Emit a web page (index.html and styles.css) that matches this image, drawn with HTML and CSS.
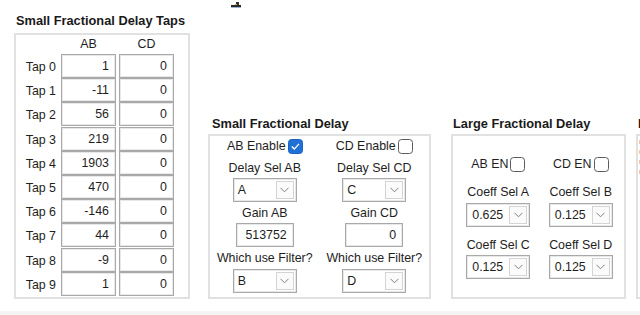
FILE: index.html
```html
<!DOCTYPE html>
<html lang="en">

<head>
    <meta charset="UTF-8">
    <meta name="viewport" content="width=device-width, initial-scale=1.0">
    <title>Fractional Delay Settings</title>
    <link rel="stylesheet" href="styles.css">
</head>

<body>
    <div class="stray-mark">
        <svg width="11" height="7" viewBox="0 0 11 7">
            <rect x="0" y="4" width="10" height="2" fill="#2a2a2a" />
            <rect x="5" y="1" width="3" height="3" fill="#333" />
            <rect x="4" y="3" width="2" height="1" fill="#d9b25a" />
            <rect x="0" y="6" width="10" height="1" fill="#9ab4d6" />
        </svg>
    </div>

    <div class="page">
        <!-- Small fractional delay taps -->
        <section class="panel panel-taps">
            <h3 class="panel-title">Small Fractional Delay Taps</h3>
            <div class="box taps-grid">
                <span></span>
                <span class="col-head">AB</span>
                <span class="col-head">CD</span>

                <span class="tap-label">Tap 0</span><span class="num-box">1</span><span class="num-box">0</span>
                <span class="tap-label">Tap 1</span><span class="num-box">-11</span><span class="num-box">0</span>
                <span class="tap-label">Tap 2</span><span class="num-box">56</span><span class="num-box">0</span>
                <span class="tap-label">Tap 3</span><span class="num-box">219</span><span class="num-box">0</span>
                <span class="tap-label">Tap 4</span><span class="num-box">1903</span><span class="num-box">0</span>
                <span class="tap-label">Tap 5</span><span class="num-box">470</span><span class="num-box">0</span>
                <span class="tap-label">Tap 6</span><span class="num-box">-146</span><span class="num-box">0</span>
                <span class="tap-label">Tap 7</span><span class="num-box">44</span><span class="num-box">0</span>
                <span class="tap-label">Tap 8</span><span class="num-box">-9</span><span class="num-box">0</span>
                <span class="tap-label">Tap 9</span><span class="num-box">1</span><span class="num-box">0</span>
            </div>
        </section>

        <!-- Small fractional delay -->
        <section class="panel panel-sfd">
            <h3 class="panel-title">Small Fractional Delay</h3>
            <div class="box sfd-box">
                <div class="sfd-col">
                    <div class="enable-row">AB Enable
                        <svg class="check" width="15" height="15" viewBox="0 0 15 15">
                            <rect x="0.5" y="0.5" width="14" height="14" rx="3" fill="#2170d6" stroke="#1c62bd" />
                            <path d="M3.8 7.6 L6.3 10.1 L11 4.9" fill="none" stroke="#fff" stroke-width="1.4" />
                        </svg>
                    </div>
                    <div class="field-label sfd-first">Delay Sel AB</div>
                    <div class="select">A<span class="drop"><svg width="9" height="6" viewBox="0 0 9 6"><polyline points="0.5,0.8 4.5,4.8 8.5,0.8" fill="none" stroke="#808080" /></svg></span></div>
                    <div class="field-label">Gain AB</div>
                    <div class="num-box gain">513752</div>
                    <div class="field-label">Which use Filter?</div>
                    <div class="select">B<span class="drop"><svg width="9" height="6" viewBox="0 0 9 6"><polyline points="0.5,0.8 4.5,4.8 8.5,0.8" fill="none" stroke="#808080" /></svg></span></div>
                </div>
                <div class="sfd-col">
                    <div class="enable-row">CD Enable
                        <svg class="check" width="15" height="15" viewBox="0 0 15 15">
                            <rect x="0.5" y="0.5" width="14" height="14" rx="3" fill="#fff" stroke="#5c5c5c" />
                        </svg>
                    </div>
                    <div class="field-label sfd-first">Delay Sel CD</div>
                    <div class="select">C<span class="drop"><svg width="9" height="6" viewBox="0 0 9 6"><polyline points="0.5,0.8 4.5,4.8 8.5,0.8" fill="none" stroke="#808080" /></svg></span></div>
                    <div class="field-label">Gain CD</div>
                    <div class="num-box gain">0</div>
                    <div class="field-label">Which use Filter?</div>
                    <div class="select">D<span class="drop"><svg width="9" height="6" viewBox="0 0 9 6"><polyline points="0.5,0.8 4.5,4.8 8.5,0.8" fill="none" stroke="#808080" /></svg></span></div>
                </div>
            </div>
        </section>

        <!-- Large fractional delay -->
        <section class="panel panel-lfd">
            <h3 class="panel-title">Large Fractional Delay</h3>
            <div class="box lfd-box">
                <div class="lfd-col">
                    <div class="enable-row lfd-enable">AB EN
                        <svg class="check" width="15" height="15" viewBox="0 0 15 15">
                            <rect x="0.5" y="0.5" width="14" height="14" rx="3" fill="#fff" stroke="#5c5c5c" />
                        </svg>
                    </div>
                    <div class="field-label lfd-label">Coeff Sel A</div>
                    <div class="select coeff">0.625<span class="drop"><svg width="9" height="6" viewBox="0 0 9 6"><polyline points="0.5,0.8 4.5,4.8 8.5,0.8" fill="none" stroke="#808080" /></svg></span></div>
                    <div class="field-label lfd-label2">Coeff Sel C</div>
                    <div class="select coeff">0.125<span class="drop"><svg width="9" height="6" viewBox="0 0 9 6"><polyline points="0.5,0.8 4.5,4.8 8.5,0.8" fill="none" stroke="#808080" /></svg></span></div>
                </div>
                <div class="lfd-col">
                    <div class="enable-row lfd-enable">CD EN
                        <svg class="check" width="15" height="15" viewBox="0 0 15 15">
                            <rect x="0.5" y="0.5" width="14" height="14" rx="3" fill="#fff" stroke="#5c5c5c" />
                        </svg>
                    </div>
                    <div class="field-label lfd-label">Coeff Sel B</div>
                    <div class="select coeff">0.125<span class="drop"><svg width="9" height="6" viewBox="0 0 9 6"><polyline points="0.5,0.8 4.5,4.8 8.5,0.8" fill="none" stroke="#808080" /></svg></span></div>
                    <div class="field-label lfd-label2">Coeff Sel D</div>
                    <div class="select coeff">0.125<span class="drop"><svg width="9" height="6" viewBox="0 0 9 6"><polyline points="0.5,0.8 4.5,4.8 8.5,0.8" fill="none" stroke="#808080" /></svg></span></div>
                </div>
            </div>
        </section>

        <!-- Next panel, only its left edge is inside the window -->
        <section class="panel panel-next">
            <h3 class="panel-title">L</h3>
            <div class="box next-box">
                <span class="tick"></span>
                <span class="tick"></span>
                <span class="tick"></span>
                <span class="tick"></span>
            </div>
        </section>
    </div>

    <div class="footer-band"></div>
</body>

</html>
```

FILE: styles.css
```css
html,
body {
    margin: 0;
    padding: 0;
    background-color: #ffffff;
    overflow: hidden;
}

body {
    font-family: "Liberation Sans", Arial, sans-serif;
    font-size: 12.4px;
    color: #1e1e1e;
    width: 640px;
    height: 315px;
    position: relative;
}

.stray-mark {
    position: absolute;
    left: 231px;
    top: 1px;
    line-height: 0;
}

.page {
    display: flex;
    align-items: flex-end;
    padding: 14px 0 0 14px;
    height: 285px;
    width: 640px;
    box-sizing: content-box;
    overflow: hidden;
}

.panel {
    flex: none;
    display: flex;
    flex-direction: column;
}

.panel-title {
    margin: 0 0 5px;
    padding-left: 2px;
    font-size: 12.8px;
    line-height: 14px;
    font-weight: bold;
    color: #1a1a1a;
    white-space: nowrap;
}

.box {
    border: 2px solid #e1e1e1;
    box-sizing: border-box;
    background-color: #fff;
}

/* taps table */

.panel-taps {
    width: 176px;
}

.taps-grid {
    height: 266px;
    display: grid;
    grid-template-columns: 42px 55px 55px;
    grid-template-rows: 19px repeat(10, 24.2px);
    column-gap: 3px;
    row-gap: 0;
    align-content: start;
}

.col-head {
    text-align: center;
    line-height: 19px;
}

.tap-label {
    text-align: right;
    padding-right: 2px;
    line-height: 26px;
    white-space: nowrap;
}

.num-box {
    border: 1px solid #a9a9a9;
    box-shadow: inset 0 0 0 1px #e8e8e8;
    box-sizing: border-box;
    height: 24px;
    line-height: 22px;
    text-align: right;
    padding-right: 6px;
    background-color: #fff;
}

/* small fractional delay */

.panel-sfd {
    width: 223px;
    margin-left: 18px;
}

.panel-sfd .panel-title {
    margin-bottom: 3px;
    padding-left: 4px;
}

.sfd-box {
    height: 165px;
    display: flex;
}

.sfd-col,
.lfd-col {
    flex: 1;
    display: flex;
    flex-direction: column;
    align-items: center;
}

.enable-row {
    display: flex;
    align-items: center;
    gap: 2px;
    height: 16px;
    line-height: 16px;
    margin-top: 2px;
    white-space: nowrap;
}

.check {
    display: block;
}

.field-label {
    line-height: 16px;
    margin-top: 3px;
    white-space: nowrap;
}

.sfd-col .field-label:last-of-type {
    margin-top: 2px;
}

.field-label.sfd-first {
    margin-top: 6px;
}

.select {
    position: relative;
    width: 64px;
    height: 24px;
    box-sizing: border-box;
    border: 1px solid #a9a9a9;
    box-shadow: inset 0 0 0 1px #e8e8e8;
    line-height: 22px;
    padding-left: 4px;
    margin-top: 2px;
    background-color: #fff;
}

.sfd-col .select:last-child {
    margin-top: 3px;
}

.drop {
    position: absolute;
    right: 2px;
    top: 2px;
    width: 18px;
    height: 18px;
    box-sizing: border-box;
    border: 1px solid #d4d4d4;
    background-color: #fbfbfb;
    display: flex;
    align-items: center;
    justify-content: center;
}

.gain {
    width: 58px;
    margin-top: 2px;
}

/* large fractional delay */

.panel-lfd {
    width: 175px;
    margin-left: 20px;
}

.panel-lfd .panel-title {
    margin-bottom: 3px;
}

.lfd-box {
    height: 165px;
    display: flex;
    padding: 0 2px 0 4px;
}

.lfd-enable {
    margin-top: 20px;
}

.field-label.lfd-label {
    margin-top: 12px;
}

.select.coeff {
    margin-top: 3px;
    padding-left: 5px;
}

.field-label.lfd-label2 {
    margin-top: 10px;
}

.lfd-col .select.coeff:last-child {
    margin-top: 2px;
}

/* cut-off panel on the right */

.panel-next {
    width: 60px;
    margin-left: 10px;
}

.panel-next .panel-title {
    margin-bottom: 3px;
}

.next-box {
    height: 165px;
    padding: 4px 0 0 1px;
    display: flex;
    flex-direction: column;
    gap: 6px;
}

.tick {
    display: block;
    width: 3px;
    height: 4px;
    background-color: #f0c89a;
}

.footer-band {
    margin-top: 12px;
    height: 4px;
    background-color: #f4f4f4;
}
```
